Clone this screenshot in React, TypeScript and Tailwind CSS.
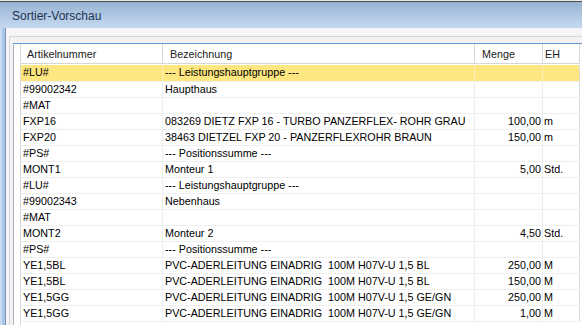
import React from "react";

type Row = { a: string; b: string; m: string; e: string; sel?: boolean };

const rows: Row[] = [
  { a: "#LU#", b: "--- Leistungshauptgruppe ---", m: "", e: "", sel: true },
  { a: "#99002342", b: "Haupthaus", m: "", e: "" },
  { a: "#MAT", b: "", m: "", e: "" },
  { a: "FXP16", b: "083269 DIETZ FXP 16 - TURBO PANZERFLEX- ROHR GRAU", m: "100,00", e: "m" },
  { a: "FXP20", b: "38463 DIETZEL FXP 20 - PANZERFLEXROHR BRAUN", m: "150,00", e: "m" },
  { a: "#PS#", b: "--- Positionssumme ---", m: "", e: "" },
  { a: "MONT1", b: "Monteur 1", m: "5,00", e: "Std." },
  { a: "#LU#", b: "--- Leistungshauptgruppe ---", m: "", e: "" },
  { a: "#99002343", b: "Nebenhaus", m: "", e: "" },
  { a: "#MAT", b: "", m: "", e: "" },
  { a: "MONT2", b: "Monteur 2", m: "4,50", e: "Std." },
  { a: "#PS#", b: "--- Positionssumme ---", m: "", e: "" },
  { a: "YE1,5BL", b: "PVC-ADERLEITUNG EINADRIG  100M H07V-U 1,5 BL", m: "250,00", e: "M" },
  { a: "YE1,5BL", b: "PVC-ADERLEITUNG EINADRIG  100M H07V-U 1,5 BL", m: "150,00", e: "M" },
  { a: "YE1,5GG", b: "PVC-ADERLEITUNG EINADRIG  100M H07V-U 1,5 GE/GN", m: "250,00", e: "M" },
  { a: "YE1,5GG", b: "PVC-ADERLEITUNG EINADRIG  100M H07V-U 1,5 GE/GN", m: "1,00", e: "M" },
];

export default function App() {
  return (
    <div
      className="w-[582px] h-[325px] overflow-hidden bg-[#e9e9e9] pt-[1px] text-black"
      style={{ fontFamily: '"Liberation Sans", Arial, sans-serif' }}
    >
      <div className="flex flex-col h-[324px] border-t border-[#4e4e4e]">
        {/* title bar */}
        <div className="h-[26px] shrink-0 flex items-center pl-[12px] bg-gradient-to-b from-[#97b3d2] to-[#c5daf0]">
          <span className="text-[12px] text-[#1c3354] leading-none pt-[2px]">Sortier-Vorschau</span>
        </div>
        <div className="flex flex-1 min-h-0">
          {/* left frame */}
          <div className="w-[6px] shrink-0 flex">
            <div className="w-[2px] bg-[#c9dbef]" />
            <div className="w-[3px] bg-[#abc5e4]" />
            <div className="w-[1px] bg-[#7491b6]" />
          </div>
          {/* client */}
          <div className="flex-1 min-w-0 bg-[#f7f4f8] pt-[8px] pl-[3px] flex flex-col">
            <div className="flex-1 border-t border-l border-[#d6d6d6] pt-[6px] pl-[3px] bg-[#f4f1f5] flex flex-col">
              <div className="flex-1 border-t border-l border-t-[#5e9bd0] border-l-[#a9b4c0] bg-white pl-[6px] flex">
                <div className="border-l border-[#d9d9d9] text-[10.75px]">
                  {/* header */}
                  <div className="flex h-[20px] border-b border-[#d6d6d6] bg-white text-[#1a1a1a]">
                    <div className="w-[142px] border-r border-[#d6d6d6] pl-[6px] pt-[4px] leading-[13px]">Artikelnummer</div>
                    <div className="w-[312px] border-r border-[#d6d6d6] pl-[7px] pt-[4px] leading-[13px]">Bezeichnung</div>
                    <div className="w-[68px] border-r border-[#d6d6d6] pl-[7px] pt-[4px] leading-[13px]">Menge</div>
                    <div className="w-[37px] border-r border-[#d6d6d6] pl-[2px] pt-[4px] leading-[13px]">EH</div>
                  </div>
                  {rows.map((r, i) => {
                    const line = r.sel ? "border-[#fff0b8]" : "border-[#ececec]";
                    return (
                      <div
                        key={i}
                        className={
                          "flex border-b border-[#efefef] " +
                          (r.sel ? "h-[18px] border-t border-t-white bg-[#fee680]" : "h-[16px]")
                        }
                      >
                        <div className={"w-[142px] border-r pl-[2px] leading-[15px] whitespace-pre " + line}>{r.a}</div>
                        <div className={"w-[312px] border-r pl-[2px] leading-[15px] whitespace-pre overflow-hidden " + line}>{r.b}</div>
                        <div className={"w-[68px] border-r pr-[1px] text-right leading-[15px] " + line}>{r.m}</div>
                        <div className={"w-[37px] border-r border-[#d9d9d9] pl-[1px] leading-[15px]"}>{r.e}</div>
                      </div>
                    );
                  })}
                </div>
              </div>
            </div>
          </div>
        </div>
      </div>
    </div>
  );
}
